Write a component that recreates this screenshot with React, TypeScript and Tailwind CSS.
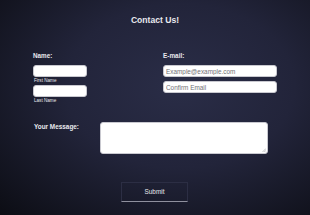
import React from "react";

const inputCls =
  "block h-[12px] rounded-[3px] border border-[#c9c9d0] bg-white px-[2px] text-[6.4px] leading-[10px] text-[#333] placeholder:text-[#727276] outline-none";

const App = () => {
  return (
    <div className="h-[215px] w-[310px] overflow-hidden bg-[radial-gradient(ellipse_at_58%_40%,#2a2d47_0%,#22243a_45%,#0c0d14_100%)] font-['Liberation_Sans',Arial,sans-serif] text-[#e9e9ee]">
      <div className="flex flex-col">
        <h1 className="pt-[15px] text-center text-[8.6px] font-bold leading-[10px]">Contact Us!</h1>

        <div className="mt-[27px] flex pl-[33px]">
          {/* name */}
          <div className="w-[54px]">
            <label className="block text-[6.3px] font-bold leading-[8px]">Name:</label>
            <input className={`${inputCls} mt-[5px] w-[54px]`} />
            <span className="block pl-[1px] pt-[1px] text-[4.6px] leading-[6px]">First Name</span>
            <input className={`${inputCls} mt-[1px] w-[54px]`} />
            <span className="block pl-[1px] pt-[1px] text-[4.6px] leading-[6px]">Last Name</span>
          </div>

          {/* email */}
          <div className="ml-[76px] w-[114px]">
            <label className="block text-[6.4px] font-bold leading-[8px]">E-mail:</label>
            <input className={`${inputCls} mt-[5px] w-[114px]`} placeholder="Example@example.com" />
            <input className={`${inputCls} mt-[4px] w-[114px]`} placeholder="Confirm Email" />
          </div>
        </div>

        <div className="mt-[18px] flex pl-[34px]">
          <label className="w-[66px] pt-[1px] text-[6.4px] font-bold leading-[8px]">Your Message:</label>
          <div className="relative">
            <textarea className="block h-[32px] w-[168px] resize-none rounded-[3px] border border-[#c9c9d0] bg-white text-[6.4px] outline-none" />
            {/* small resize grip */}
            <svg className="absolute bottom-[2px] right-[2px]" width="4" height="4" viewBox="0 0 4 4">
              <path d="M4 0.5 L0.5 4 M4 2.3 L2.3 4" stroke="#9a9aa0" strokeWidth="0.6" />
            </svg>
          </div>
        </div>

        <div className="mt-[23px] pl-[121px]">
          <button className="h-[20px] w-[67px] border border-[#2c2e44] border-b-[#8f909e] text-[6.4px] leading-[8px] text-[#e9e9ee]">
            Submit
          </button>
        </div>
      </div>
    </div>
  );
};

export default App;
